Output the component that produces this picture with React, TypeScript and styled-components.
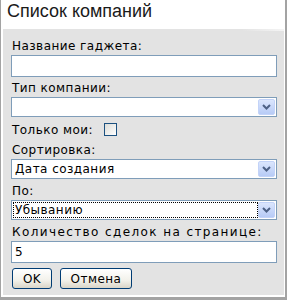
import React from "react";
import styled, { createGlobalStyle } from "styled-components";

const GlobalStyle = createGlobalStyle`
   html, body {
      margin: 0;
      padding: 0;
      background: #ffffff;
   }
`;

const Frame = styled.div`
   box-sizing: border-box;
   width: 287px;
   height: 300px;
   border-left: 1px solid #a3a3a3;
   border-right: 2px solid #a3a3a3;
   border-bottom: 3px solid #a3a3a3;
   padding: 0 1px 2px 2px;
   display: flex;
   flex-direction: column;
   background: #ffffff;
`;

const Title = styled.h1`
   margin: 0;
   height: 29px;
   padding: 0 0 0 4px;
   font: 18px/22px "Liberation Sans", Arial, sans-serif;
   color: #1a1a1a;
`;

const Panel = styled.form`
   flex: 1;
   margin: 0;
   padding: 9px 7px 0 8px;
   background: linear-gradient(to right, #e3e3e3 85%, #f4f4f4) top / 100% 2px no-repeat, #e3e3e3;
   display: flex;
   flex-direction: column;
   font: 12px "DejaVu Sans", Verdana, sans-serif;
   letter-spacing: 0.45px;
   color: #000;
`;

const Label = styled.div<{ $top?: number; $spacing?: number }>`
   height: 17px;
   line-height: 16px;
   margin-top: ${(p) => p.$top ?? 0}px;
   padding-left: 1px;
   white-space: nowrap;
   ${(p) => (p.$spacing ? `letter-spacing: ${p.$spacing}px;` : "")}
`;

const TextBox = styled.div`
   box-sizing: border-box;
   height: 22px;
   border: 1px solid #7f9db9;
   background: #fff;
   padding: 0 3px;
   line-height: 20px;
`;

const SelectBox = styled.div`
   box-sizing: border-box;
   height: 20px;
   border: 1px solid #7f9db9;
   background: #fff;
   padding: 1px;
   display: flex;
   align-items: stretch;
`;

const SelectValue = styled.div<{ $focused?: boolean }>`
   flex: 1;
   padding-left: 2px;
   line-height: 16px;
   outline: ${(p) => (p.$focused ? "1px dotted #000" : "none")};
   outline-offset: -1px;
`;

const DropButton = styled.div`
   box-sizing: border-box;
   width: 17px;
   border: 1px solid #c3d3f8;
   border-radius: 2px;
   background: linear-gradient(#dbe6fd, #b7cbf6);
   display: flex;
   align-items: center;
   justify-content: center;
`;

const CheckRow = styled.div`
   height: 25px;
   display: flex;
   align-items: center;
   gap: 11px;
   padding-left: 1px;
`;

const Check = styled.span`
   box-sizing: border-box;
   width: 13px;
   height: 13px;
   border: 1px solid #1c5180;
   background: linear-gradient(135deg, #dcdcd7, #ffffff);
`;

const Buttons = styled.div`
   margin-top: 5px;
   display: flex;
   gap: 8px;
   padding-left: 1px;
`;

const Button = styled.button<{ $w: number }>`
   box-sizing: border-box;
   width: ${(p) => p.$w}px;
   height: 21px;
   border: 1px solid #003c74;
   border-radius: 3px;
   background: linear-gradient(#ffffff, #f2f1ea 60%, #d9d5c8);
   font: 12px "DejaVu Sans", Verdana, sans-serif;
   letter-spacing: 0.45px;
   color: #000;
   padding: 0;
`;

const Arrow = () => (
   <svg width="9" height="6" viewBox="0 0 9 6">
      <path d="M1 1 L4.5 4.5 L8 1" fill="none" stroke="#4d6185" strokeWidth="2" />
   </svg>
);

const Select: React.FC<{ value?: string; focused?: boolean }> = ({ value, focused }) => (
   <SelectBox>
      <SelectValue $focused={focused}>{value}</SelectValue>
      <DropButton>
         <Arrow />
      </DropButton>
   </SelectBox>
);

export default function App() {
   return (
      <>
         <GlobalStyle />
         <Frame>
            <Title>Список компаний</Title>
            <Panel onSubmit={(e) => e.preventDefault()}>
               <Label>Название гаджета:</Label>
               <TextBox />
               <Label $top={3}>Тип компании:</Label>
               <Select />
               <CheckRow>
                  Только мои:
                  <Check />
               </CheckRow>
               <Label>Сортировка:</Label>
               <Select value="Дата создания" />
               <Label $top={4}>По:</Label>
               <Select value="Убыванию" focused />
               <Label $top={4} $spacing={1.4}>
                  Количество сделок на странице:
               </Label>
               <TextBox>5</TextBox>
               <Buttons>
                  <Button $w={40}>OK</Button>
                  <Button $w={72}>Отмена</Button>
               </Buttons>
            </Panel>
         </Frame>
      </>
   );
}
